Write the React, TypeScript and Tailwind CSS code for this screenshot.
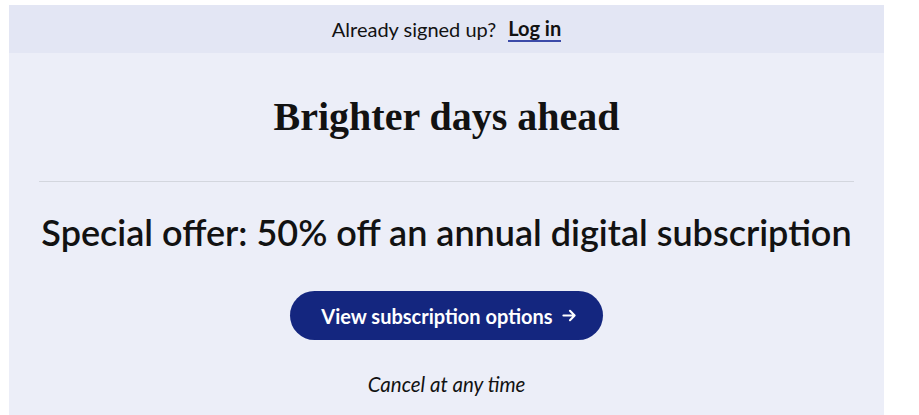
import React from "react";

export default function App() {
  return (
    <div className="w-[919px] h-[415px] bg-white pt-[5px] pl-[9px] overflow-hidden" style={{ fontFamily: "Lato, 'Noto Sans', sans-serif" }}>
      <div className="w-[875px] h-[410px] bg-[#eceef8] flex flex-col">
        <div className="h-[48px] bg-[#e3e6f4] flex items-center justify-center text-[20px] text-[#121212]">
          <span>Already signed up?</span>
          <a className="ml-[12px] font-bold border-b-2 border-[#3b4aa8] leading-[23px]">Log in</a>
        </div>
        <div className="px-[30px] flex flex-col items-center">
          <h1 className="mt-[40px] text-[40px] font-bold text-[#121212] leading-[48px]" style={{ fontFamily: "'Liberation Serif', serif" }}>
            Brighter days ahead
          </h1>
          <div className="mt-[40px] w-full h-px bg-[#d3d6de]" />
          <h2 className="mt-[28px] text-[36px] font-semibold text-[#121212] leading-[44px]">
            Special offer: 50% off an annual digital subscription
          </h2>
          <button className="mt-[37px] w-[313px] h-[49px] rounded-full bg-[#14267f] text-white font-bold text-[20px] flex items-center justify-center gap-[9px] pl-[5px]">
            <span>View subscription options</span>
            <svg width="15" height="15" viewBox="0 0 16 16" fill="none" stroke="white" strokeWidth="2.2" strokeLinecap="round" strokeLinejoin="round">
              <path d="M1.5 8h12M8.5 3L13.5 8l-5 5" />
            </svg>
          </button>
          <p className="mt-[29px] italic text-[20.5px] text-[#121212]">Cancel at any time</p>
        </div>
      </div>
    </div>
  );
}
